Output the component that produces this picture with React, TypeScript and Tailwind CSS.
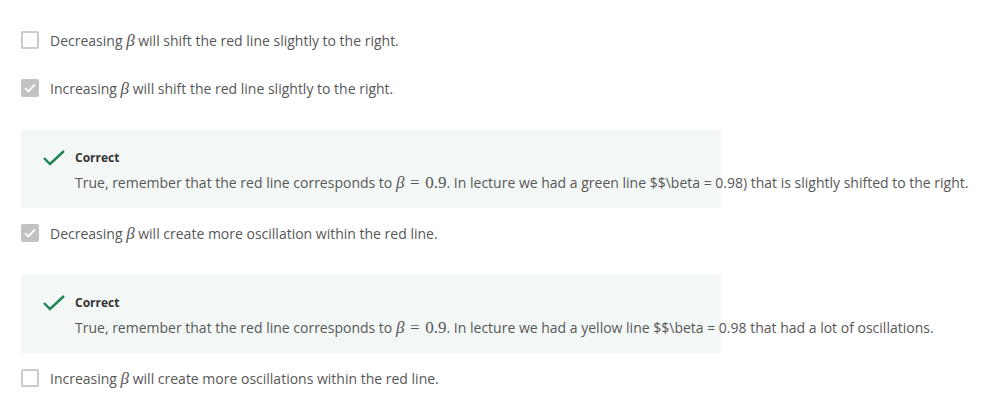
import React from "react";

type Option = {
  id: string;
  before: string;
  after: string;
  checked: boolean;
  feedback?: { lineColor: string; rest: string };
};

const options: Option[] = [
  { id: "a", before: "Decreasing", after: "will shift the red line slightly to the right.", checked: false },
  {
    id: "b",
    before: "Increasing",
    after: "will shift the red line slightly to the right.",
    checked: true,
    feedback: { lineColor: "green", rest: "$$\\beta = 0.98) that is slightly shifted to the right." },
  },
  {
    id: "c",
    before: "Decreasing",
    after: "will create more oscillation within the red line.",
    checked: true,
    feedback: { lineColor: "yellow", rest: "$$\\beta = 0.98 that had a lot of oscillations." },
  },
  { id: "d", before: "Increasing", after: "will create more oscillations within the red line.", checked: false },
];

const mathFont = { fontFamily: '"Liberation Serif", "DejaVu Serif", serif' };

function Beta() {
  return (
    <span className="italic text-[17px] leading-none" style={mathFont}>
      β
    </span>
  );
}

function Checkbox(props: { checked: boolean }) {
  if (props.checked) {
    return (
      <span className="w-[18px] h-[18px] rounded-[2px] bg-[#c2c2c2] flex items-center justify-center shrink-0">
        <svg width="12" height="10" viewBox="0 0 12 10" fill="none">
          <path d="M1 5.2 L4.4 8.4 L11 1.4" stroke="#fff" strokeWidth="1.8" />
        </svg>
      </span>
    );
  }
  return <span className="w-[18px] h-[18px] rounded-[2px] border-2 border-[#cbcbcb] bg-white shrink-0" />;
}

export default function App() {
  return (
    <div className="w-[1008px] h-[420px] bg-white pl-[21px] pt-[30px] text-[14px] text-[#575757]" style={{ fontFamily: '"Open Sans", sans-serif' }}>
      {options.map((option, index) => (
        <div key={option.id} className={index === 1 ? "mt-[28px]" : index > 1 ? "mt-[15px]" : ""}>
          <label className="flex items-center gap-[11px] h-[20px]">
            <Checkbox checked={option.checked} />
            <span className="whitespace-nowrap">
              {option.before} <Beta /> {option.after}
            </span>
          </label>
          {option.feedback && (
            <div className="mt-[32px] w-[700px] h-[78px] bg-[#f3f8f6] pt-[20px] pl-[22px]">
              <div className="flex items-center h-[16px]">
                <svg width="22" height="16" viewBox="0 0 22 16" fill="none" className="mr-[10px]">
                  <path d="M1 8 L7 14 L21 1" stroke="#1f8354" strokeWidth="2.4" />
                </svg>
                <span className="text-[12px] font-bold text-[#333]">Correct</span>
              </div>
              <p className="mt-[7px] ml-[32px] h-[20px] leading-[20px] whitespace-nowrap">
                True, remember that the red line corresponds to <Beta />
                <span className="text-[17px]" style={mathFont}>
                  {"\u2004"}={"\u2004"}0.9
                </span>
                . In lecture we had a {option.feedback.lineColor} line {option.feedback.rest}
              </p>
            </div>
          )}
        </div>
      ))}
    </div>
  );
}
